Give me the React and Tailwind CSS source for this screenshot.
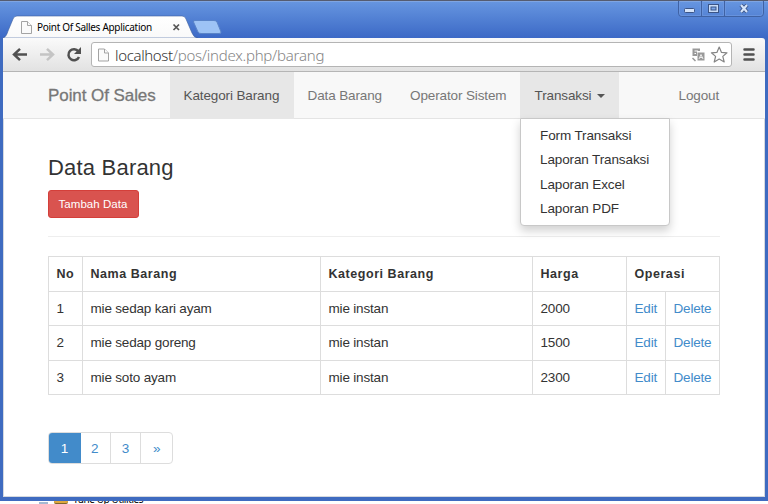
import React from "react";

function PageIcon({ className }) {
  return (
    <svg className={className} viewBox="0 0 11 13" fill="#fafafa" stroke="#a3a3a3" strokeWidth="1">
      <path d="M.5 .5H6.5L10.5 4.5V12.5H.5Z" />
      <path d="M6.5 .5V4.5H10.5" />
    </svg>
  );
}

function TitleBar() {
  return (
    <div className="relative h-[38px] bg-linear-to-b from-[#6796e0] to-[#3c69c6] border-t border-[#555c70]">
      <div className="h-px bg-[#7fa5e2]" />
      <svg className="absolute left-0 top-0" width="240" height="37" viewBox="0 0 240 37">
        <defs>
          <linearGradient id="tab" x1="0" y1="0" x2="0" y2="1">
            <stop offset="0" stopColor="#ffffff" />
            <stop offset="1" stopColor="#f9f9f9" />
          </linearGradient>
        </defs>
        <path d="M3 37C6 36 7 33 8 30L13 18Q14 15 17 15H182Q185 15 186 18L192 32Q194 37 198 37Z" fill="url(#tab)" stroke="#3c5f9e" strokeWidth=".6" />
        <path d="M195 19.5H214Q216 19.5 217 21L221 31Q221.500 32.500 219 32.500H201Q199 32.500 198 31L193.500 21Q193 19.500 195 19.500Z" fill="#9dc3f5" stroke="#5a84c8" strokeWidth="1" />
        <path d="M173.500 23.500L179 29M179 23.500L173.500 29" stroke="#555" strokeWidth="1.700" />
      </svg>
      <div className="absolute left-[21px] top-[19px] flex items-center">
        <PageIcon className="h-[13px] w-[11px]" />
        <span className="ml-[5px] whitespace-nowrap font-['Noto_Sans',sans-serif] text-[10px] leading-[14px] tracking-[-0.3px] text-black">Point Of Salles Application</span>
      </div>
      <svg className="absolute left-[678px] top-0" width="86" height="17" viewBox="0 0 86 17" fill="none">
        <path d="M.5 0V12Q.5 15.500 3.500 15.500H82.500Q85.500 15.500 85.500 12V0M23.500 0V15M46.500 0V15" stroke="#3f62a4" />
        <path d="M1.500 0V12Q1.500 14.500 4 14.500H22.500V0M24.500 0V14.500H45.500V0M47.500 0V14.500H82Q84.500 14.500 84.500 12V0" stroke="#6f98df" strokeOpacity=".7" />
        <rect x="6.500" y="7.500" width="10" height="4" rx="1" fill="#d5e4fa" stroke="#3b5486" />
        <rect x="18" y="3.500" width="10" height="8" transform="translate(-0.5 0) translate(13 0)" fill="#c9dcf8" stroke="#3b5486" />
        <rect x="33" y="6" width="5" height="3" fill="#7ca5e8" stroke="#3b5486" />
        <path d="M63 4L69 11M69 4L63 11" stroke="#3b5486" strokeWidth="4" />
        <path d="M63 4L69 11M69 4L63 11" stroke="#d5e4fa" strokeWidth="2.200" />
      </svg>
    </div>
  );
}

function Toolbar() {
  return (
    <div className="mx-[3px] flex h-[34px] rounded-tr-[3px] border-b border-[#b5b5b5] bg-linear-to-b from-[#fafafa] to-[#e2e2e2]">
      <svg className="shrink-0" width="88" height="33" viewBox="3 38 88 33" fill="none">
        <path d="M27 54.500H14.500M20 48.800L14 54.500L20 60.200" stroke="#505050" strokeWidth="2.500" />
        <path d="M40 54.500H52.500M47 48.800L53 54.500L47 60.200" stroke="#c4c4c4" strokeWidth="2.500" />
        <path d="M78.400 51.500A5.500 5.500 0 1 0 79 57" stroke="#505050" strokeWidth="2.500" />
        <path d="M81 47V54H74Z" fill="#505050" />
      </svg>
      <div className="mt-[4px] flex h-[25px] w-[641px] shrink-0 items-center rounded-[3px] border border-[#b4b4b4] bg-white pl-[6px]">
        <PageIcon className="h-[14px] w-[11px] shrink-0" />
        <span className="ml-[6px] w-[595px] shrink-0 whitespace-nowrap font-['Noto_Sans',sans-serif] text-[15px] leading-[20px] font-light tracking-[-0.250px] text-[#858585]">
          <span className="tracking-[-0.350px] text-[#333]">localhost</span>
          <span>/pos/index.php/barang</span>
        </span>
      </div>
      <svg className="-ml-[44px] shrink-0" width="77" height="33" viewBox="688 38 77 33" fill="none">
        <path d="M692.500 48.500H700V51H697V56H692.500Z" fill="#999" />
        <path d="M694.500 51H698M694.500 53.500H696" stroke="#fff" />
        <rect x="697.500" y="52.500" width="7" height="8" fill="#999" />
        <path d="M699 59L701 54.500L703 59M700 57.500H702.500" stroke="#fff" strokeWidth=".8" />
        <path d="M692.500 58L695.500 61" stroke="#999" strokeWidth="1.500" />
        <path d="M719.200 47L721.500 52.400L727 52.800L722.800 56.400L724.200 62L719.200 59L714.200 62L715.600 56.400L711.400 52.800L716.900 52.400Z" stroke="#858585" strokeWidth="1.200" strokeLinejoin="round" />
        <path d="M744.500 49.500H753.500M744.500 54.500H753.500M744.500 59.500H753.500" stroke="#505050" strokeWidth="2.500" strokeLinecap="round" />
      </svg>
    </div>
  );
}

const transactionLinks = ["Form Transaksi", "Laporan Transaksi", "Laporan Excel", "Laporan PDF"];

function Navbar() {
  return (
    <nav className="ml-[3px] mr-[3px] flex h-[47px] border-b border-[#e4e4e4] bg-[#f8f8f8] leading-[47px] text-[#777] whitespace-nowrap">
      <div className="w-[167px] shrink-0 pl-[45px] text-[17px] tracking-[-0.070px] [-webkit-text-stroke:0.3px_#777]">Point Of Sales</div>
      <div className="h-[47px] w-[124px] shrink-0 bg-[#e7e7e7] pl-[13.500px] text-[#555]">Kategori Barang</div>
      <div className="w-[103px] shrink-0 pl-[13.500px]">Data Barang</div>
      <div className="w-[123px] shrink-0 pl-[13px]">Operator Sistem</div>
      <div className="relative flex h-[47px] w-[99px] shrink-0 items-center bg-[#e7e7e7] pl-[14.500px] text-[#555]">
        Transaksi
        <span className="ml-[6px] mt-px border-x-[4px] border-t-[4px] border-x-transparent border-t-[#555]" />
        <div className="absolute left-0 top-[46px] h-[108px] w-[150px] rounded-b-[4px] border border-[#c8c8c8] bg-white pl-[19px] pt-[5px] leading-[24.300px] text-[#333] shadow-[0_5px_10px_rgba(0,0,0,0.18)]">
          {transactionLinks.map((label) => <div key={label}>{label}</div>)}
        </div>
      </div>
      <div className="ml-[59.500px]">Logout</div>
    </nav>
  );
}

const items = [
  [1, "mie sedap kari ayam", "mie instan", 2000],
  [2, "mie sedap goreng", "mie instan", 1500],
  [3, "mie soto ayam", "mie instan", 2300],
];

function ItemTable() {
  return (
    <table className="w-[672px] table-fixed border-collapse text-left [&_td]:border [&_td]:border-[#ddd] [&_td]:p-0 [&_td]:pt-px [&_td]:pl-[7.500px] [&_th]:border [&_th]:border-[#ddd] [&_th]:p-0 [&_th]:pl-[7.500px]">
      <colgroup>
        <col className="w-[34px]" />
        <col className="w-[238px]" />
        <col className="w-[212px]" />
        <col className="w-[94px]" />
        <col className="w-[39px]" />
        <col className="w-[54px]" />
      </colgroup>
      <thead>
        <tr className="h-[34.500px] text-[12.500px] tracking-[0.550px]">
          <th>No</th><th>Nama Barang</th><th>Kategori Barang</th><th>Harga</th><th colSpan={2}>Operasi</th>
        </tr>
      </thead>
      <tbody>
        {items.map(([no, name, category, price]) => (
          <tr key={no} className="h-[34.600px] tracking-[-0.180px]">
            <td>{no}</td><td>{name}</td><td>{category}</td><td>{price}</td>
            <td className="text-[#428bca]">Edit</td>
            <td className="text-[#428bca]">Delete</td>
          </tr>
        ))}
      </tbody>
    </table>
  );
}

function Pagination() {
  return (
    <div className="flex h-[32px] w-[125px] overflow-hidden rounded-[4px] border border-[#ddd] text-center leading-[31px] text-[#428bca]">
      <span className="-m-px h-[32px] w-[33px] bg-[#428bca] leading-[33px] text-white">1</span>
      <span className="w-[31px] border-r border-[#ddd]">2</span>
      <span className="w-[31px] border-r border-[#ddd]">3</span>
      <span className="w-[31px]">»</span>
    </div>
  );
}

export default function App() {
  return (
    <div className="h-[504px] w-[768px] overflow-hidden bg-white font-['Liberation_Sans',Arial,sans-serif] text-[13.500px] leading-[18px] tracking-[-0.120px] text-[#333]">
      <div className="flex h-[501px] flex-col bg-[#3f6bc0]">
        <TitleBar />
        <Toolbar />
        <Navbar />
        <main className="ml-[3px] mr-[3px] h-[378px] border-x border-b border-[#d5d9df] bg-white pl-[44px]">
          <h3 className="pt-[36px] text-[22px] leading-[26px] tracking-[0.200px]">Data Barang</h3>
          <button className="mt-[9px] block h-[28px] w-[91px] rounded-[3px] border border-[#d43f3a] bg-[#d9534f] pr-px text-[11.500px] tracking-[0.050px] text-white">Tambah Data</button>
          <div className="mb-[19px] mt-[18px] w-[672px] border-t border-[#eee]" />
          <div className="h-[176px]"><ItemTable /></div>
          <Pagination />
        </main>
      </div>
      <div className="flex h-[3px] items-end overflow-hidden pl-[39px]">
        <span className="h-[2px] w-[9px] bg-[#a5b9d2]" />
        <span className="ml-[6px] h-[3px] w-[14px] rounded-b-[2px] border-b border-[#80662b] bg-[#dfa83e]" />
        <span className="ml-[5px] font-['Noto_Sans',sans-serif] text-[10px] leading-[10px] tracking-[-0.400px] text-black">Tune Up Utilities</span>
      </div>
    </div>
  );
}
